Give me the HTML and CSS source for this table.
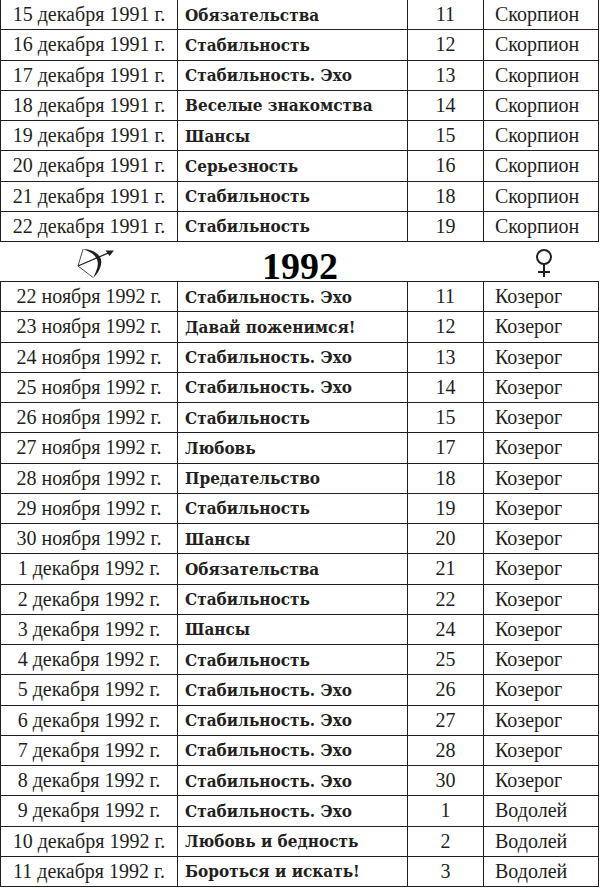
FILE: index.html
```html
<!DOCTYPE html>
<html lang="ru">
<head>
<meta charset="utf-8">
<title>1992</title>
<link rel="stylesheet" href="styles.css">
</head>
<body>
<div class="page">
  <div class="table first">
    <div class="row"><div class="c date">15 декабря 1991 г.</div><div class="c name">Обязательства</div><div class="c num">11</div><div class="c sign">Скорпион</div></div>
    <div class="row"><div class="c date">16 декабря 1991 г.</div><div class="c name">Стабильность</div><div class="c num">12</div><div class="c sign">Скорпион</div></div>
    <div class="row"><div class="c date">17 декабря 1991 г.</div><div class="c name">Стабильность. Эхо</div><div class="c num">13</div><div class="c sign">Скорпион</div></div>
    <div class="row"><div class="c date">18 декабря 1991 г.</div><div class="c name">Веселые знакомства</div><div class="c num">14</div><div class="c sign">Скорпион</div></div>
    <div class="row"><div class="c date">19 декабря 1991 г.</div><div class="c name">Шансы</div><div class="c num">15</div><div class="c sign">Скорпион</div></div>
    <div class="row"><div class="c date">20 декабря 1991 г.</div><div class="c name">Серьезность</div><div class="c num">16</div><div class="c sign">Скорпион</div></div>
    <div class="row"><div class="c date">21 декабря 1991 г.</div><div class="c name">Стабильность</div><div class="c num">18</div><div class="c sign">Скорпион</div></div>
    <div class="row"><div class="c date">22 декабря 1991 г.</div><div class="c name">Стабильность</div><div class="c num">19</div><div class="c sign">Скорпион</div></div>
  </div>

  <div class="year-head">
    <div class="sym sag">
      <svg width="40" height="33" viewBox="0 0 40 33" aria-hidden="true">
        <polyline points="7,2.3 2,19 17.3,30.7" fill="none" stroke="#231f20" stroke-width="0.8"/>
        <path d="M7,2.3 C15,1.5 25.5,7 25.3,15 C25.1,22 20.5,28 17.3,30.7 C19,26 22.3,21 21.8,15.5 C21.3,9.5 15,4.5 7,2.3 Z" fill="#231f20"/>
        <line x1="2" y1="19" x2="35" y2="4.8" stroke="#231f20" stroke-width="1.3"/>
        <polygon points="38,3.5 29.5,3.6 33.5,9" fill="#231f20"/>
      </svg>
    </div>
    <div class="year">1992</div>
    <div class="sym ven">
      <svg width="20" height="32" viewBox="0 0 20 32" aria-hidden="true">
        <circle cx="10" cy="10" r="7" fill="none" stroke="#231f20" stroke-width="2"/>
        <line x1="10" y1="17" x2="10" y2="30" stroke="#231f20" stroke-width="2"/>
        <line x1="4" y1="25" x2="16" y2="25" stroke="#231f20" stroke-width="2"/>
      </svg>
    </div>
  </div>

  <div class="table second">
    <div class="row"><div class="c date">22 ноября 1992 г.</div><div class="c name">Стабильность. Эхо</div><div class="c num">11</div><div class="c sign">Козерог</div></div>
    <div class="row"><div class="c date">23 ноября 1992 г.</div><div class="c name">Давай поженимся!</div><div class="c num">12</div><div class="c sign">Козерог</div></div>
    <div class="row"><div class="c date">24 ноября 1992 г.</div><div class="c name">Стабильность. Эхо</div><div class="c num">13</div><div class="c sign">Козерог</div></div>
    <div class="row"><div class="c date">25 ноября 1992 г.</div><div class="c name">Стабильность. Эхо</div><div class="c num">14</div><div class="c sign">Козерог</div></div>
    <div class="row"><div class="c date">26 ноября 1992 г.</div><div class="c name">Стабильность</div><div class="c num">15</div><div class="c sign">Козерог</div></div>
    <div class="row"><div class="c date">27 ноября 1992 г.</div><div class="c name">Любовь</div><div class="c num">17</div><div class="c sign">Козерог</div></div>
    <div class="row"><div class="c date">28 ноября 1992 г.</div><div class="c name">Предательство</div><div class="c num">18</div><div class="c sign">Козерог</div></div>
    <div class="row"><div class="c date">29 ноября 1992 г.</div><div class="c name">Стабильность</div><div class="c num">19</div><div class="c sign">Козерог</div></div>
    <div class="row"><div class="c date">30 ноября 1992 г.</div><div class="c name">Шансы</div><div class="c num">20</div><div class="c sign">Козерог</div></div>
    <div class="row"><div class="c date">1 декабря 1992 г.</div><div class="c name">Обязательства</div><div class="c num">21</div><div class="c sign">Козерог</div></div>
    <div class="row"><div class="c date">2 декабря 1992 г.</div><div class="c name">Стабильность</div><div class="c num">22</div><div class="c sign">Козерог</div></div>
    <div class="row"><div class="c date">3 декабря 1992 г.</div><div class="c name">Шансы</div><div class="c num">24</div><div class="c sign">Козерог</div></div>
    <div class="row"><div class="c date">4 декабря 1992 г.</div><div class="c name">Стабильность</div><div class="c num">25</div><div class="c sign">Козерог</div></div>
    <div class="row"><div class="c date">5 декабря 1992 г.</div><div class="c name">Стабильность. Эхо</div><div class="c num">26</div><div class="c sign">Козерог</div></div>
    <div class="row"><div class="c date">6 декабря 1992 г.</div><div class="c name">Стабильность. Эхо</div><div class="c num">27</div><div class="c sign">Козерог</div></div>
    <div class="row"><div class="c date">7 декабря 1992 г.</div><div class="c name">Стабильность. Эхо</div><div class="c num">28</div><div class="c sign">Козерог</div></div>
    <div class="row"><div class="c date">8 декабря 1992 г.</div><div class="c name">Стабильность. Эхо</div><div class="c num">30</div><div class="c sign">Козерог</div></div>
    <div class="row"><div class="c date">9 декабря 1992 г.</div><div class="c name">Стабильность. Эхо</div><div class="c num">1</div><div class="c sign">Водолей</div></div>
    <div class="row"><div class="c date">10 декабря 1992 г.</div><div class="c name">Любовь и бедность</div><div class="c num">2</div><div class="c sign">Водолей</div></div>
    <div class="row"><div class="c date">11 декабря 1992 г.</div><div class="c name">Бороться и искать!</div><div class="c num">3</div><div class="c sign">Водолей</div></div>
  </div>
</div>
</body>
</html>
```

FILE: styles.css
```css
html, body {
  margin: 0;
  padding: 0;
  background: #ffffff;
}

.page {
  width: 600px;
  color: #231f20;
  font-family: "Liberation Serif", "DejaVu Serif", serif;
}

.table {
  width: 599px;
  box-sizing: border-box;
  border-left: 1px solid #231f20;
  border-right: 1px solid #231f20;
}

.table.second {
  border-top: 1px solid #231f20;
}

.row {
  display: grid;
  grid-template-columns: 176px 230px 76px 1fr;
  height: 30.25px;
  box-sizing: border-box;
  border-bottom: 1px solid #231f20;
}

.c {
  display: flex;
  align-items: center;
  white-space: nowrap;
  overflow: hidden;
}

.c + .c {
  border-left: 1px solid #231f20;
}

.date {
  justify-content: center;
  font-size: 20px;
}

.name {
  padding-left: 7px;
  font-family: "DejaVu Serif Condensed", "DejaVu Serif", "Liberation Serif", serif;
  font-stretch: condensed;
  font-weight: bold;
  font-size: 17px;
}

.num {
  justify-content: center;
  font-size: 20px;
}

.sign {
  padding-left: 11px;
  font-size: 20px;
}

.year-head {
  display: grid;
  grid-template-columns: 177px 246px 1fr;
  height: 39px;
}

.sym {
  display: flex;
  align-items: flex-start;
  padding-top: 5px;
}

.sag {
  padding-left: 76px;
}

.ven {
  padding-left: 111px;
}

.year {
  display: flex;
  justify-content: center;
  align-items: center;
  font-weight: bold;
  font-size: 38px;
  padding-top: 2px;
  color: #000;
}
```
